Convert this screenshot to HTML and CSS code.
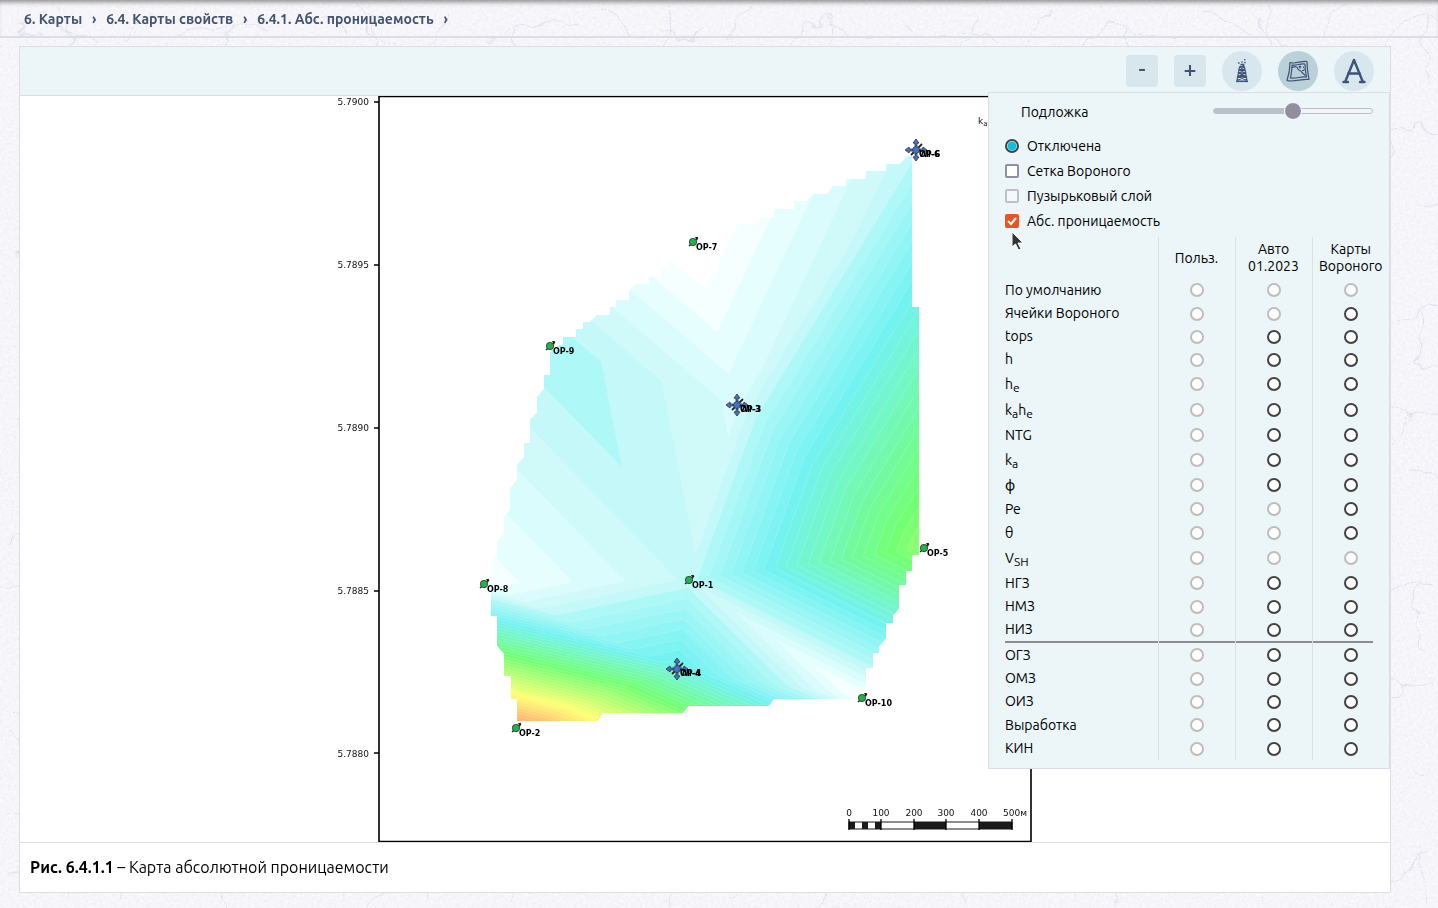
FILE: index.html
```html
<!DOCTYPE html>
<html lang="ru">
<head>
<meta charset="utf-8">
<title>6.4.1. Абс. проницаемость</title>
<link rel="stylesheet" href="styles.css">
</head>
<body>
<svg class="paper" aria-hidden="true">
  <defs>
    <filter id="grain" x="0" y="0" width="100%" height="100%">
      <feTurbulence type="fractalNoise" baseFrequency="0.35" numOctaves="3" seed="4"/>
      <feColorMatrix values="0 0 0 0 0.72  0 0 0 0 0.72  0 0 0 0 0.84  0.5 0.5 0 0 -0.38"/>
    </filter>
    <filter id="bend" x="0" y="0" width="100%" height="100%">
      <feTurbulence type="fractalNoise" baseFrequency="0.02" numOctaves="3" seed="9"/>
      <feDisplacementMap in="SourceGraphic" scale="50" xChannelSelector="R" yChannelSelector="G"/>
    </filter>
    <pattern id="fibres" width="300" height="280" patternUnits="userSpaceOnUse">
      <g fill="none" stroke="#dfdfee" stroke-width="1">
        <path d="M10 20l34 12M56 24l40 16M60 6l12 30-8 34M150 10l-26 40M180 40l44-18 50 10M224 24l-6 50 18 20M20 90l40-20M70 84l30 26M10 150l36-10 28 12M104 130l-10 40 20 36M160 110l40 20 50-4M200 130l-16 44M250 100l20 36M20 180l18 30M60 240l50-18 46 14M130 200l30 36M220 200l44 10M250 220l-10 40M10 262l40-8"/>
      </g>
    </pattern>
  </defs>
  <rect width="100%" height="100%" filter="url(#grain)"/>
  <rect width="100%" height="100%" fill="url(#fibres)" filter="url(#bend)"/>
</svg>

<nav class="crumbs" aria-label="Навигация">
  <a href="#maps">6. Карты</a><span class="sep">›</span>
  <a href="#props">6.4. Карты свойств</a><span class="sep">›</span>
  <a href="#perm">6.4.1. Абс. проницаемость</a><span class="sep">›</span>
</nav>

<main class="card">
  <div class="toolbar">
    <button class="zoom-btn" type="button" aria-label="Уменьшить">-</button>
    <button class="zoom-btn" type="button" aria-label="Увеличить">+</button>
    <button class="round-btn" type="button" aria-label="Скважины">
      <svg width="14" height="24" viewBox="0 0 14 24" fill="none" stroke="#3f5376" stroke-width="1.2">
        <path d="M4.500 8L2 21.500M9.500 8L12 21.500M4 11h6M3.500 14h7M3 17.500h8M4.500 8l5.500 3-6.500 3 7.500 3.500-9 4M9.500 8L4 11l6.500 3L3 17.500l9 4"/>
        <path d="M1 22.300h12" stroke-width="1.600"/>
        <path d="M4.500 7.500h5M5.500 5.500h3v2" stroke-width="1.600"/>
        <path d="M3 3.500l1.500 1M6.500 2.500l1 1M9 1l1.500-.5M9.500 4l1-1" stroke-width="1.300"/>
      </svg>
    </button>
    <button class="round-btn active" type="button" aria-label="Подложка">
      <svg width="24" height="22" viewBox="0 0 24 22" fill="none" stroke="#3f5376" stroke-width="1.2" stroke-linejoin="round">
        <path d="M4 2.500c6 2 11-2 17-1 0 6 1 13 2 18-7-1-15 3-22 1 2-6 3-12 3-18z"/>
        <path d="M6 5c5 1 8-2 13-1 0 5 .5 8 1.500 13-6-1-10 2-16 1C5.500 13 6 9 6 5z"/>
        <path d="M6 7.500c4-1.500 5-1 6 1.500 1 2 3 1 4 3.500l3.500 3"/>
        <path d="M13 6l2 2m0-2l-2 2M17.500 6.500l.1 1.500M16 10.500h2M18.500 9l-.5 1" stroke-width="1.100"/>
      </svg>
    </button>
    <button class="round-btn" type="button" aria-label="Подписи">
      <svg width="24" height="26" viewBox="0 0 24 26" stroke="#3f5376" stroke-width="2.4" stroke-linecap="round">
        <line x1="12" y1="2" x2="3.500" y2="23"/><line x1="12" y1="2" x2="20.500" y2="23"/>
        <line x1="6.500" y1="15.500" x2="17.500" y2="15.500"/>
        <line x1="1.500" y1="24" x2="6" y2="24"/><line x1="18" y1="24" x2="22.500" y2="24"/>
      </svg>
    </button>
  </div>

  <figure class="figure">
    <svg class="map" id="map" viewBox="330 96 750 746" role="img" aria-label="Карта абсолютной проницаемости">
      <defs>
        <clipPath id="area"><path d="M908 156H912V307H919V555H912V571H906V585H899V608L893 615V623H886V638L879 646V653H873V668H866V685L855 699H774L768 706H688L682 713H602L597 721H517V699H511V676H504V653L497 645V616H491V562L497 555V542L504 533V517L510 510V488L517 480V465L524 457V443H530V420L537 413V397L544 389V375H550V352L559 345H563V337H576V329H583V322H590L597 315H610V307H616V300H629V292L636 284H649V277H662V269H669V262L735 232L738 224H755L761 217H774V209H794V201H807L814 194H827L833 186H846V179H866V171H886V164H900Z"/></clipPath>
        <g id="producer">
          <path d="M-4 4L5-4" stroke="#222" stroke-width="1.400"/><path d="M2-5l3 0-1 4z" fill="#222"/>
          <circle r="3.700" fill="#22b14c" stroke="#222" stroke-width=".7"/>
        </g>
        <g id="injector">
          <path d="M-5 5L6-6" stroke="#222" stroke-width="1.800"/>
          <path d="M0-11l3 4-2 .5v3h-2v-3l-2-.5zM0 11l3-4-2-.5v-3h-2v3l-2 .5zM-11 0l4-3 .5 2h3v2h-3l-.5 2zM11 0l-4-3-.5 2h-3v2h3l.5 2z" fill="#4472c4" stroke="#333" stroke-width=".8"/>
          <circle r="3.500" fill="#4472c4" stroke="#333" stroke-width=".7"/>
        </g>
      </defs>
      <g id="bands" clip-path="url(#area)"></g>
      <path d="M379 96.500H1031V841.500H379Z" fill="none" stroke="#000" stroke-width="1.600"/>
      <g class="axis">
        <path d="M374 102h5M374 265h5M374 428h5M374 591h5M374 753h5" stroke="#000" stroke-width="1.500"/>
        <text x="369" y="105">5.7900</text><text x="369" y="268">5.7895</text><text x="369" y="431">5.7890</text><text x="369" y="594">5.7885</text><text x="369" y="757">5.7880</text>
      </g>
      <text class="unit" x="978" y="124">k<tspan class="unit-sub" dy="2">абс</tspan></text>
      <g id="wells"></g>
      <g class="scale">
        <path d="M849 822h163v7H849z" fill="#fff" stroke="#1a1a1a"/>
        <path d="M849 822h6v7h-6zM862 822h6v7h-6zM875 822h6v7h-6zM914 822h32v7h-32zM979 822h33v7h-33z" fill="#1a1a1a"/>
        <path d="M849 819v11M881 819v11M914 819v11M946 819v11M979 819v11M1012 819v11" stroke="#000" stroke-width="1.300"/>
        <text x="849" y="816">0</text><text x="881" y="816">100</text><text x="914" y="816">200</text><text x="946" y="816">300</text><text x="979" y="816">400</text><text x="1015" y="816">500м</text>
      </g>
    </svg>
    <figcaption class="caption"><b>Рис. 6.4.1.1</b> – Карта абсолютной проницаемости</figcaption>
  </figure>

  <form class="panel">
    <div class="opacity"><label for="opacity">Подложка</label><input id="opacity" type="range" min="0" max="100" value="50"></div>
    <label class="option"><input type="radio" name="layer" checked>Отключена</label>
    <label class="option"><input type="checkbox">Сетка Вороного</label>
    <label class="option"><input type="checkbox" disabled>Пузырьковый слой</label>
    <label class="option"><input type="checkbox" checked>Абс. проницаемость</label>
    <table class="layers">
      <thead><tr><td></td><th id="c1" scope="col">Польз.</th><th id="c2" scope="col">Авто 01.2023</th><th id="c3" scope="col">Карты Вороного</th></tr></thead>
      <tbody id="layers"></tbody>
    </table>
    <svg class="cursor" width="14" height="22" viewBox="0 0 14 22" aria-hidden="true"><path d="M1 1v15l3.500-3 3 6 2.500-1-3-6h5z" fill="#333" stroke="#fff"/></svg>
  </form>
</main>
<script src="map.js"></script>
</body>
</html>
```
FILE: styles.css
```css
* { box-sizing: border-box; }
body {
  margin: 0;
  min-height: 100vh;
  background: #f9f9fc;
  color: #000;
  font-family: Ubuntu, "Open Sans", "Noto Sans", sans-serif;
  font-size: 14px;
  line-height: 17px;
}
.paper { position: fixed; inset: 0; width: 100%; height: 100%; z-index: -1; }
.crumbs {
  display: flex;
  align-items: center;
  height: 38px;
  padding: 2px 24px 0;
  border-bottom: 2px solid #dddde5;
  box-shadow: inset 0 5px 5px -3px #888;
  font-size: 14px;
  font-weight: 700;
  white-space: nowrap;
}
.crumbs a { color: #44546f; text-decoration: none; }
.sep { width: 24px; text-align: center; color: #44546f; }
.card {
  position: relative;
  margin: 8px 47px 15px 19px;
  border: 1px solid #dddee5;
  background: #fff;
}
.toolbar {
  display: flex;
  align-items: center;
  justify-content: flex-end;
  gap: 16px;
  height: 49px;
  padding-right: 16px;
  border-bottom: 1px solid #dddee5;
  background: #ecf5f8;
}
.zoom-btn, .round-btn {
  display: flex;
  align-items: center;
  justify-content: center;
  padding: 0;
  border: 0;
  background: #d8e7ed;
  color: #3f5376;
}
.zoom-btn { width: 32px; height: 32px; padding-bottom: 5px; border-radius: 4px; font: 500 23px Ubuntu, "Open Sans", sans-serif; }
.round-btn { width: 40px; height: 40px; border-radius: 50%; }
.round-btn.active { background: #bad1da; }
.figure { margin: 0; }
.map { display: block; width: 100%; max-width: 750px; margin: 0 auto; }
.axis text, .unit, .scale text { font-family: "DejaVu Sans", sans-serif; font-size: 9px; fill: #111; }
.unit-sub { font-size: 7px; }
.axis text { text-anchor: end; }
.scale text { text-anchor: middle; }
.well { font: bold 8px "DejaVu Sans", sans-serif; }
.caption { padding: 16px 10px; border-top: 1px solid #dddee5; font-size: 16px; }
.panel {
  position: absolute;
  top: 45px;
  right: 0;
  width: 402px;
  padding: 0 0 8px 16px;
  border: 1px solid #dddee5;
  background: #ecf5f8;
}
.opacity {
  display: flex;
  align-items: center;
  justify-content: space-between;
  height: 38px;
  margin-bottom: 3px;
  padding: 0 16px;
}
.option { display: flex; align-items: center; gap: 8px; height: 25px; padding-bottom: 1px; }
input[type="range"] { appearance: none; width: 160px; height: 20px; margin: 0 0 2px; background: none; }
input[type="range"]::-webkit-slider-runnable-track {
  height: 6px;
  border: 1px solid #bcc0cb;
  border-radius: 3px;
  background: linear-gradient(90deg, #bcc0cb 50%, #f3f4f7 50%);
}
input[type="range"]::-webkit-slider-thumb {
  appearance: none;
  width: 18px;
  height: 18px;
  margin-top: -7px;
  border: 1px solid #fff;
  border-radius: 50%;
  background: #918f9f;
}
input[type="radio"], input[type="checkbox"] {
  appearance: none;
  flex: none;
  width: 14px;
  height: 14px;
  margin: 0;
  background: #fff;
}
input[type="radio"] { border: 2px solid #424242; border-radius: 50%; }
input[type="radio"]:disabled { border-color: #bdbdbd; }
input[type="radio"]:checked { background: radial-gradient(circle, #0dbfe2 4px, #fff 5px); }
input[type="checkbox"] { border: 2px solid #918f9f; border-radius: 2px; }
input[type="checkbox"]:disabled { border-color: #bcc0cb; background: #f5f9fc; }
input[type="checkbox"]:checked {
  border: 0;
  background: #e95420 url("data:image/svg+xml,%3Csvg xmlns='http://www.w3.org/2000/svg' viewBox='0 0 14 14'%3E%3Cpath d='M3 7l3 3 5-6' fill='none' stroke='white' stroke-width='2'/%3E%3C/svg%3E");
}
.layers { width: 100%; margin-top: 3px; border-collapse: collapse; table-layout: fixed; }
.layers th, .layers td { padding: 0; font-weight: 400; height: 24px; }
.layers thead th { width: 77px; height: 41px; padding-top: 1px; }
.layers thead th, .layers td + td, .layers th + td { border-left: 1px solid #dcdfe6; text-align: center; }
.layers tbody th { text-align: left; }
.layers .low th, .layers .low td { height: 23px; }
.layers .sub th, .layers .sub td { height: 26px; }
.layers .ruled th, .layers .ruled td { height: 25px; padding-bottom: 2px; }
.layers .ruled { background: linear-gradient(#8a8d8f, #8a8d8f) left bottom / calc(100% - 16px) 2px no-repeat; }
.layers input { display: block; margin: 0 auto; }
.layers sub { font-size: 12px; line-height: 0; vertical-align: -3px; }
.cursor { position: absolute; left: 22px; top: 138px; }
```
FILE: map.js
```js
// Wells: coordinates on the map and permeability level
const wells = {
  1: [689, 580, 5.2], 2: [516, 728, 47], 3: [737, 405, 3.73], 4: [677, 669, 13.9],
  5: [924, 548, 26.5], 6: [916, 150, 5.65], 7: [693, 242, -0.15], 8: [484, 584, 1.3],
  9: [550, 346, 6.85], 10: [862, 698, 0.7]
};
const triangles = [[7, 9, 3], [7, 3, 6], [9, 3, 1], [9, 1, 8], [3, 6, 5], [3, 1, 5],
  [8, 1, 4], [8, 4, 2], [1, 4, 10], [1, 5, 10], [4, 2, 10]];
const stops = [[0.5, 255, 255, 255], [1.5, 245, 255, 255], [2.5, 230, 254, 254], [3.5, 219, 252, 252],
  [4.5, 208, 250, 250], [5.5, 197, 249, 249], [6.5, 174, 248, 247], [12.5, 115, 242, 242],
  [23.5, 115, 255, 115], [36, 255, 255, 115], [44, 255, 180, 115], [60, 255, 115, 115]];

function colour(v) {
  let i = 1;
  while (i < stops.length - 1 && v > stops[i][0]) i++;
  const a = stops[i - 1], b = stops[i], t = Math.max(0, (v - a[0]) / (b[0] - a[0]));
  return "rgb(" + [1, 2, 3].map(n => Math.round(a[n] + (b[n] - a[n]) * t)).join() + ")";
}

// Part of a triangle where the value is above the level
function above(tri, level) {
  const out = [];
  tri.forEach((p, i) => {
    const q = tri[(i + 1) % 3];
    if (p[2] >= level) out.push([p[0], p[1]]);
    if ((p[2] >= level) !== (q[2] >= level)) {
      const t = (level - p[2]) / (q[2] - p[2]);
      out.push([p[0] + (q[0] - p[0]) * t, p[1] + (q[1] - p[1]) * t, 1]);
    }
  });
  return out;
}

const oriented = triangles.map(t => {
  const [a, b, c] = t.map(n => wells[n]);
  const cross = (b[0] - a[0]) * (c[1] - a[1]) - (b[1] - a[1]) * (c[0] - a[0]);
  return cross > 0 ? [a, b, c] : [a, c, b];
});

let bands = "";
for (let level = 1; level < 47; level++) {
  let area = "", line = "";
  for (const tri of oriented) {
    const poly = above(tri, level);
    if (!poly.length) continue;
    area += "M" + poly.map(p => p[0].toFixed(1) + " " + p[1].toFixed(1)).join("L") + "Z";
    const cut = poly.filter(p => p[2]);
    if (cut.length === 2) line += "M" + cut.map(p => p[0].toFixed(1) + " " + p[1].toFixed(1)).join("L");
  }
  const fill = colour(level + 0.5);
  bands += `<path d="${area}" fill="${fill}" stroke="${fill}" stroke-width=".5"/>`;
  if (level > 6) bands += `<path d="${line}" stroke="#fff" stroke-opacity=".22" stroke-width=".8"/>`;
}
document.getElementById("bands").innerHTML = bands;

document.getElementById("wells").innerHTML = Object.entries(wells).map(([n, [x, y]]) => {
  const injector = n === "3" || n === "4" || n === "6";
  const label = text => `<text class="well" x="${x + 3}" y="${y + (injector ? 7 : 8)}">${text}-${n}</text>`;
  return `<use href="#${injector ? "injector" : "producer"}" x="${x}" y="${y}"/>` +
    label("OP") + (injector ? label("WI") : "");
}).join("");

// Layer table: label, row class, enabled flags of the three columns
const rows = [
  ["По умолчанию", "", "000"], ["Ячейки Вороного", "low", "001"], ["tops", "low", "011"], ["h", "low", "011"],
  ["h<sub>e</sub>", "sub", "011"], ["k<sub>a</sub>h<sub>e</sub>", "sub", "011"], ["NTG", "", "011"],
  ["k<sub>a</sub>", "sub", "011"], ["ϕ", "", "011"], ["Pe", "", "001"], ["θ", "", "001"],
  ["V<sub>SH</sub>", "sub", "000"], ["НГЗ", "", "011"], ["НМЗ", "low", "011"], ["НИЗ", "ruled", "011"],
  ["ОГЗ", "", "011"], ["ОМЗ", "low", "011"], ["ОИЗ", "low", "011"], ["Выработка", "", "011"], ["КИН", "low", "011"]
];
document.getElementById("layers").innerHTML = rows.map(([name, cls, on], r) =>
  `<tr class="${cls}"><th id="r${r}" scope="row">${name}</th>` + [...on].map((f, c) =>
    `<td><input type="radio" name="layer" aria-labelledby="r${r} c${c + 1}"${f === "1" ? "" : " disabled"}></td>`
  ).join("") + "</tr>").join("");
```
